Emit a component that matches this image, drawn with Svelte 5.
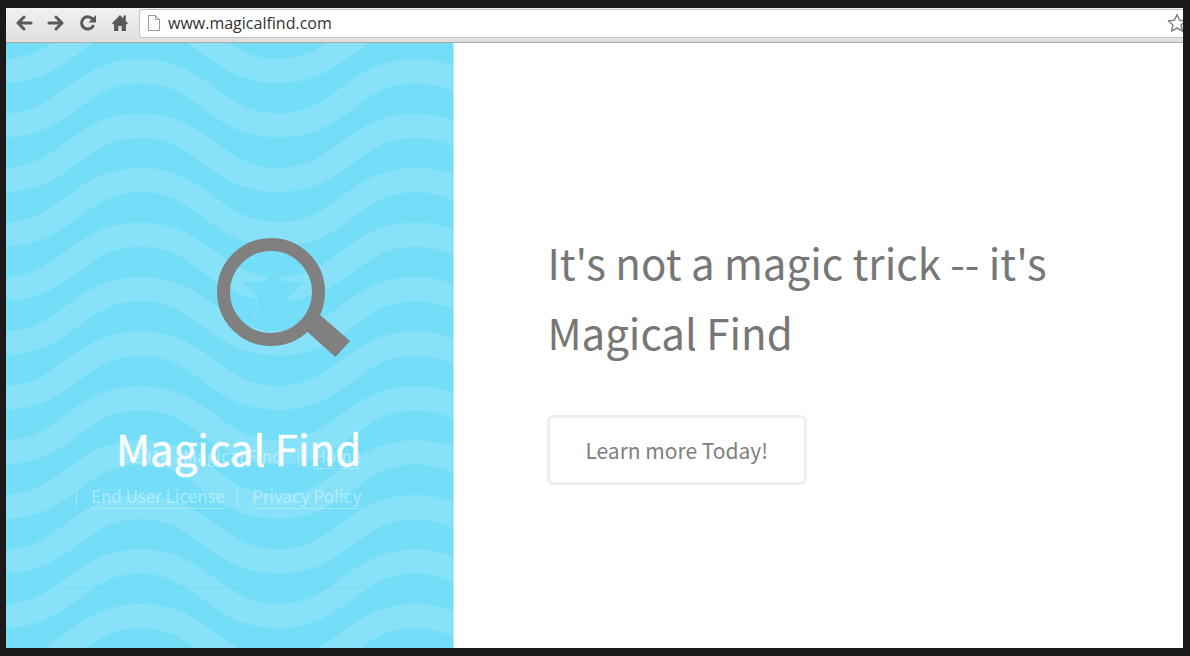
<script lang="ts">
  const links = [
    { label: 'Home', href: '#home' },
    { label: 'End User License', href: '#license' },
    { label: 'Privacy Policy', href: '#privacy' }
  ];

  const waveRows = [-1, 0, 1, 2];
  const rowGap = 54.5;

  let address = $state('www.magicalfind.com');
</script>

<div class="window">
  <header class="toolbar">
    <button class="tool" aria-label="Back">
      <svg viewBox="0 0 18 18"><path d="M16 9H3M9 3L3 9l6 6" /></svg>
    </button>
    <button class="tool" aria-label="Forward">
      <svg viewBox="0 0 18 18"><path d="M2 9h13M9 3l6 6-6 6" /></svg>
    </button>
    <button class="tool" aria-label="Reload">
      <svg viewBox="0 0 18 18">
        <path d="M14 12.2A6.2 6.2 0 1 1 13.4 4.8" />
        <path class="solid" d="M17 1v7.5H9.5z" />
      </svg>
    </button>
    <button class="tool" aria-label="Home page">
      <svg viewBox="0 0 18 18">
        <path class="solid" d="M9 1L1 9.3l1.2 1.2L3 9.8V17h4.4v-5h3.2v5H15V9.8l.8.7L17 9.3l-2.2-2.4V1.6h-2.4v2.8z" />
      </svg>
    </button>
    <label class="address">
      <svg class="page-icon" viewBox="0 0 14 18">
        <path d="M1.5 1.5h7l4 4v11h-11zM8.5 1.5v4h4" />
      </svg>
      <input type="text" aria-label="Address" bind:value={address} />
      <svg class="bookmark" viewBox="0 0 20 20">
        <path d="M10 1.5l2.6 5.7 6 .6-4.5 4.2 1.3 6.2L10 15l-5.4 3.2L5.9 12 1.4 7.8l6-.6z" />
      </svg>
    </label>
  </header>

  <div class="page">
    <aside class="sidebar">
      <svg class="waves" aria-hidden="true">
        <defs>
          <pattern id="wave" x="-3" y="0" width="275" height="109" patternUnits="userSpaceOnUse">
            {#each waveRows as row (row)}
              <path
                transform="translate(0 {row * rowGap})"
                d="M-137.500 28C-73 28-65 82.500 0 82.500S73 28 137.500 28 210 82.500 275 82.500 348 28 412.500 28"
              />
            {/each}
          </pattern>
        </defs>
        <rect width="100%" height="100%" fill="url(#wave)" />
      </svg>

      <div class="brand">
        <svg class="logo" viewBox="0 0 134 120" aria-hidden="true">
          <path class="star" d="M57 22l8 22 23 1-16 15 4 22-19-10-19 10 3-22-16-15 23-1z" />
          <circle cx="54" cy="55" r="47.5" />
          <path class="handle" d="M86 91L102 77l31 27-14.500 16z" />
        </svg>
        <h1>Magical Find</h1>
      </div>

      <footer>
        <nav>
          <span>©2014 - Magical Find</span>
          {#each links as link (link.label)}
            <span class="item"><a href={link.href}>{link.label}</a></span>
          {/each}
        </nav>
      </footer>
    </aside>

    <main>
      <h2>It's not a magic trick -- it's Magical Find</h2>
      <button class="learn">Learn more Today!</button>
    </main>
  </div>
</div>

<style>
  :global(body) {
    margin: 0;
    background: #1a1a1a;
  }

  .window {
    box-sizing: border-box;
    display: flex;
    flex-direction: column;
    min-height: 100vh;
    padding: 8px 7px 8px 6px;
    font-family: 'Noto Sans CJK SC', 'Open Sans', sans-serif;
  }

  button {
    padding: 0;
    border: none;
    background: none;
    font: inherit;
    cursor: pointer;
  }

  .toolbar {
    display: flex;
    padding: 1px 0 4px 2px;
    border-bottom: 1px solid #a9a9a9;
    background: linear-gradient(#f2f2f2, #dfdfdf);
    overflow: hidden;
  }

  .tool {
    display: grid;
    place-items: center;
    width: 32px;
    height: 28px;
  }

  .tool svg {
    width: 18px;
    height: 18px;
    fill: none;
    stroke: #5a5a5a;
    stroke-width: 3;
    stroke-linecap: round;
    stroke-linejoin: round;
  }

  .tool .solid {
    fill: #5a5a5a;
    stroke: none;
  }

  .address {
    display: flex;
    flex: 1;
    align-items: center;
    gap: 7px;
    box-sizing: border-box;
    height: 29px;
    margin-left: 3px;
    padding: 0 0 2px 7px;
    border: 1px solid #c4c4c4;
    border-right: none;
    border-radius: 3px 0 0 3px;
    background: #fff;
    overflow: hidden;
  }

  .address input {
    flex: 1;
    min-width: 0;
    padding: 0;
    border: none;
    outline: none;
    background: none;
    color: #333;
    font-family: 'Open Sans', sans-serif;
    font-size: 16px;
  }

  .page-icon {
    width: 14px;
    height: 18px;
    fill: #fafafa;
    stroke: #999;
  }

  .bookmark {
    flex: none;
    width: 20px;
    height: 20px;
    margin-right: -4px;
    fill: #fff;
    stroke: #858585;
    stroke-width: 1.5;
    stroke-linejoin: round;
  }

  .page {
    display: flex;
    flex: 1;
    background: #fff;
  }

  .sidebar {
    position: relative;
    display: flex;
    flex: 0 0 38%;
    flex-direction: column;
    justify-content: center;
    box-sizing: border-box;
    padding: 29px 92px 0 0;
    background: #74def8;
    box-shadow: 1px 0 #b5eaf8;
  }

  .waves {
    position: absolute;
    inset: 0;
    width: 100%;
    height: 100%;
  }

  .waves path {
    fill: none;
    stroke: #87e2f9;
    stroke-width: 24;
  }

  .brand {
    position: relative;
    z-index: 1;
    display: flex;
    flex-direction: column;
    align-items: flex-end;
    gap: 56px;
  }

  .logo {
    width: 134px;
    height: 120px;
    margin-right: 10px;
  }

  .logo circle {
    fill: none;
    stroke: #808080;
    stroke-width: 13;
  }

  .logo .handle {
    fill: #808080;
  }

  .logo .star {
    fill: #74def8;
    stroke: #83e2f9;
  }

  h1,
  h2 {
    margin: 0;
    font-size: 42px;
    font-weight: 400;
    line-height: 70px;
  }

  h1 {
    color: #fff;
    -webkit-text-stroke: 1px rgba(255, 255, 255, 0.4);
  }

  footer {
    position: absolute;
    right: 84px;
    bottom: 60px;
    left: 50px;
    padding: 0 8px 71px 0;
    border-bottom: 1px solid rgba(110, 205, 230, 0.4);
    color: rgba(255, 255, 255, 0.4);
    font-size: 17px;
    line-height: 40px;
    text-align: right;
  }

  .item {
    display: inline-block;
    white-space: nowrap;
  }

  .item::before {
    content: '';
    display: inline-block;
    height: 18px;
    margin: 0 14px 0 12px;
    border-left: 1px solid rgba(255, 255, 255, 0.3);
    vertical-align: middle;
  }

  footer a {
    border-bottom: 1px dotted rgba(255, 255, 255, 0.5);
    color: inherit;
    text-decoration: none;
  }

  main {
    display: flex;
    flex: 1;
    flex-direction: column;
    align-items: flex-start;
    justify-content: center;
    gap: 48px;
    padding: 21px 8% 0;
  }

  h2 {
    color: #777;
  }

  .learn {
    padding: 0 36px 0 35px;
    border: 3px solid #efefef;
    border-radius: 6px;
    color: #808080;
    font-size: 21px;
    line-height: 64px;
  }
</style>
